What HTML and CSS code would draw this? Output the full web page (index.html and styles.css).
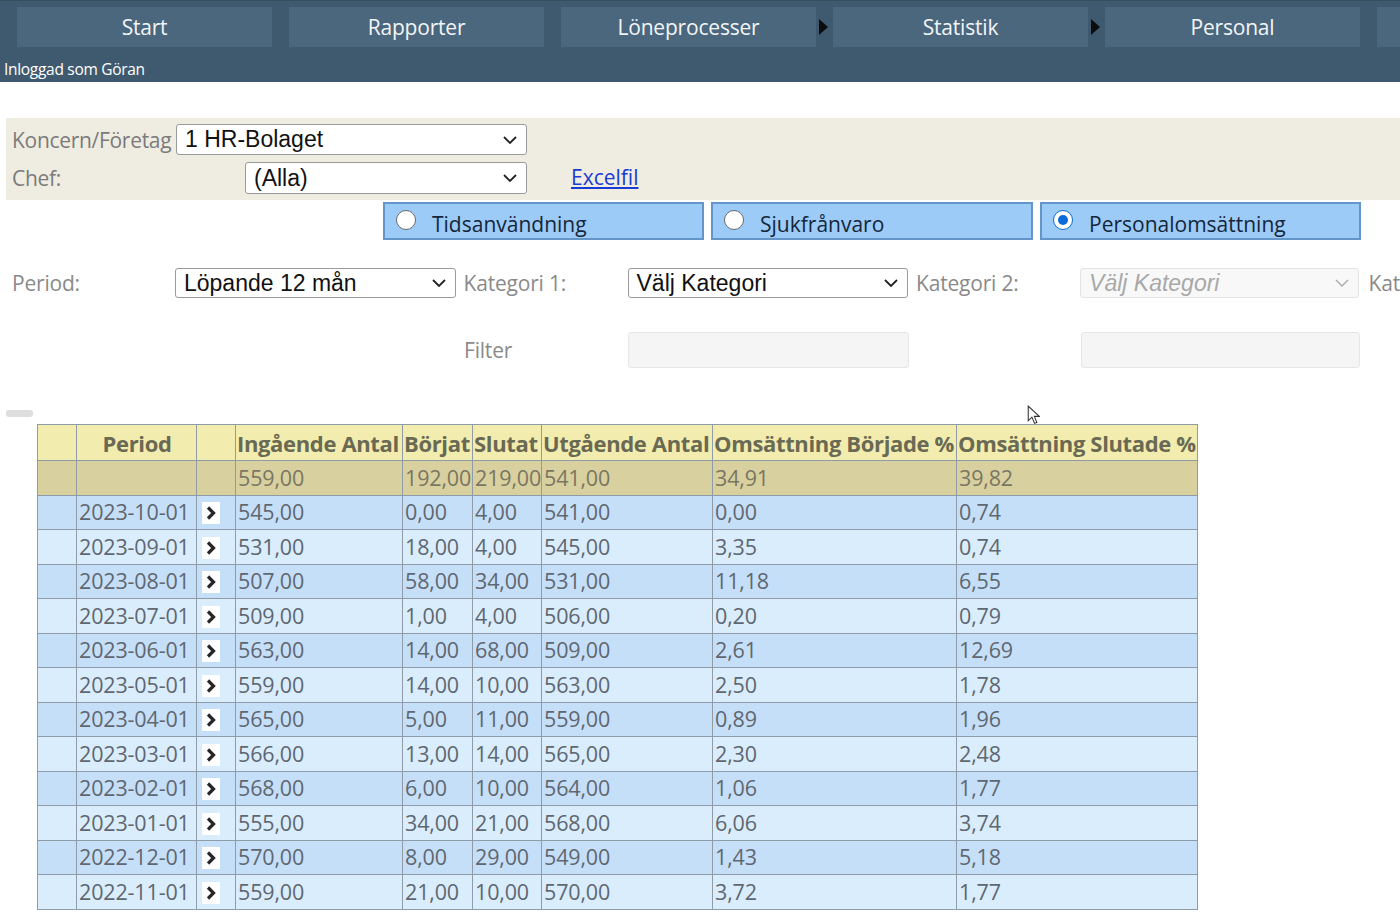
FILE: index.html
```html
<!DOCTYPE html>
<html lang="sv">
<head>
<meta charset="utf-8">
<title>Personalomsättning</title>
<link rel="stylesheet" href="styles.css">
</head>
<body>
<header class="topbar">
  <nav class="menu">
    <div class="menu-item">Start</div>
    <div class="menu-item">Rapporter</div>
    <div class="menu-item has-sub">Löneprocesser<span class="tri"></span></div>
    <div class="menu-item has-sub">Statistik<span class="tri"></span></div>
    <div class="menu-item">Personal</div>
    <div class="menu-item cut"></div>
  </nav>
  <div class="user">Inloggad som Göran</div>
</header>

<section class="company-panel">
  <div class="prow">
    <span class="plabel w164">Koncern/Företag</span>
    <div class="select w351"><span>1 HR-Bolaget</span><svg class="chev" viewBox="0 0 16 10"><path d="M2 2 L8 8 L14 2" fill="none" stroke="#222" stroke-width="1.8"/></svg></div>
  </div>
  <div class="prow">
    <span class="plabel w233">Chef:</span>
    <div class="select w282"><span>(Alla)</span><svg class="chev" viewBox="0 0 16 10"><path d="M2 2 L8 8 L14 2" fill="none" stroke="#222" stroke-width="1.8"/></svg></div>
    <a class="excel" href="#">Excelfil</a>
  </div>
</section>

<div class="radios">
  <label class="rbox"><span class="radio"></span><span class="rtext">Tidsanvändning</span></label>
  <label class="rbox"><span class="radio"></span><span class="rtext">Sjukfrånvaro</span></label>
  <label class="rbox"><span class="radio on"></span><span class="rtext">Personalomsättning</span></label>
</div>

<div class="frow">
  <span class="flabel w163">Period:</span>
  <div class="select fsel w281"><span>Löpande 12 mån</span><svg class="chev" viewBox="0 0 16 10"><path d="M2 2 L8 8 L14 2" fill="none" stroke="#222" stroke-width="1.8"/></svg></div>
  <span class="flabel w164 ml8">Kategori 1:</span>
  <div class="select fsel w281"><span>Välj Kategori</span><svg class="chev" viewBox="0 0 16 10"><path d="M2 2 L8 8 L14 2" fill="none" stroke="#222" stroke-width="1.8"/></svg></div>
  <span class="flabel w164 ml8">Kategori 2:</span>
  <div class="select fsel disabled w279"><span>Välj Kategori</span><svg class="chev" viewBox="0 0 16 10"><path d="M2 2 L8 8 L14 2" fill="none" stroke="#aaa" stroke-width="1.4"/></svg></div>
  <span class="flabel ml10">Kat</span>
</div>

<div class="filterrow">
  <span class="flabel filter-label">Filter</span>
  <div class="finput w281"></div>
  <div class="finput w279 ml172"></div>
</div>

<div class="pill"></div>

<table class="grid">
  <colgroup>
    <col style="width:39px"><col style="width:120px"><col style="width:39px"><col style="width:167px"><col style="width:70px"><col style="width:69px"><col style="width:171px"><col style="width:244px"><col style="width:241px">
  </colgroup>
  <thead>
    <tr><th></th><th class="c">Period</th><th></th><th>Ingående Antal</th><th>Börjat</th><th>Slutat</th><th>Utgående Antal</th><th>Omsättning Började %</th><th>Omsättning Slutade %</th></tr>
  </thead>
  <tbody id="tb">
    <tr class="total"><td></td><td></td><td></td><td>559,00</td><td>192,00</td><td>219,00</td><td>541,00</td><td>34,91</td><td>39,82</td></tr>
  </tbody>
</table>

<svg class="cursor" viewBox="0 0 12 19" width="13" height="20"><path d="M1 1 L1 15 L4.5 11.5 L7 17.5 L9.2 16.6 L6.8 10.8 L11.5 10.8 Z" fill="#fff" stroke="#333" stroke-width="1"/></svg>

<script src="app.js"></script>
</body>
</html>
```

FILE: app.js
```js
var rows = [
  ["2023-10-01","545,00","0,00","4,00","541,00","0,00","0,74"],
  ["2023-09-01","531,00","18,00","4,00","545,00","3,35","0,74"],
  ["2023-08-01","507,00","58,00","34,00","531,00","11,18","6,55"],
  ["2023-07-01","509,00","1,00","4,00","506,00","0,20","0,79"],
  ["2023-06-01","563,00","14,00","68,00","509,00","2,61","12,69"],
  ["2023-05-01","559,00","14,00","10,00","563,00","2,50","1,78"],
  ["2023-04-01","565,00","5,00","11,00","559,00","0,89","1,96"],
  ["2023-03-01","566,00","13,00","14,00","565,00","2,30","2,48"],
  ["2023-02-01","568,00","6,00","10,00","564,00","1,06","1,77"],
  ["2023-01-01","555,00","34,00","21,00","568,00","6,06","3,74"],
  ["2022-12-01","570,00","8,00","29,00","549,00","1,43","5,18"],
  ["2022-11-01","559,00","21,00","10,00","570,00","3,72","1,77"]
];
var tb = document.getElementById("tb");
var chev = '<span class="go"><svg viewBox="0 0 12 16" width="12" height="16"><path d="M3 2.5 L8.5 8 L3 13.5" fill="none" stroke="#262626" stroke-width="3.2"/></svg></span>';
rows.forEach(function (r, i) {
  var tr = document.createElement("tr");
  tr.className = i % 2 === 0 ? "ra" : "rb";
  tr.innerHTML = "<td></td><td>" + r[0] + "</td><td>" + chev + "</td><td>" + r[1] + "</td><td>" + r[2] +
    "</td><td>" + r[3] + "</td><td>" + r[4] + "</td><td>" + r[5] + "</td><td>" + r[6] + "</td>";
  tb.appendChild(tr);
});
```

FILE: styles.css
```css
html, body { margin: 0; padding: 0; background: #fff; }
body { font-family: "Open Sans", "Noto Sans", sans-serif; color: #555; width: 1400px; overflow: hidden; position: relative; height: 917px; }

.topbar { background: #3f5a6f; height: 82px; box-sizing: border-box; padding-top: 6px; border-top: 1px solid #37505f; }
.menu { display: flex; gap: 17px; padding-left: 17px; height: 40px; }
.menu-item { flex: 0 0 255px; height: 40px; background: #4b677d; color: #f2f5f7; font-size: 21px; display: flex; align-items: center; justify-content: center; position: relative; letter-spacing: -0.2px; }
.menu-item.cut { flex: 0 0 40px; }
.tri { position: absolute; right: -12px; top: 12px; width: 0; height: 0; border-top: 8px solid transparent; border-bottom: 8px solid transparent; border-left: 9px solid #0d0d0d; }
.user { color: #fff; font-size: 15.5px; padding-left: 4px; margin-top: 11px; letter-spacing: -0.3px; }

.company-panel { margin: 36px 0 0 6px; background: #efece1; padding: 6px 0 6px 6px; }
.prow { display: flex; align-items: center; height: 31px; }
.prow + .prow { margin-top: 7px; height: 32px; }
.plabel { font-size: 21px; color: #7b7b7b; white-space: nowrap; letter-spacing: -0.3px; }
.w164 { width: 164px; flex: 0 0 164px; }
.w233 { width: 233px; flex: 0 0 233px; }
.w163 { width: 163px; flex: 0 0 163px; }
.w351 { width: 351px; }
.w282 { width: 282px; }
.w281 { width: 281px; }
.w279 { width: 279px; }
.ml8 { margin-left: 8px; }
.ml10 { margin-left: 10px; }
.ml172 { margin-left: 172px; }

.select { box-sizing: border-box; height: 100%; background: #fff; border: 1px solid #9a9a9a; border-radius: 3px; display: flex; align-items: center; justify-content: space-between; padding: 0 8px 0 8px; font-family: "Liberation Sans", Arial, sans-serif; font-size: 23px; color: #111; }
.chev { width: 16px; height: 10px; flex: 0 0 16px; }
.excel { margin-left: 44px; margin-top: -2px; font-size: 21px; color: #1a3bd6; text-decoration: underline; font-family: "Open Sans", sans-serif; }

.radios { display: flex; gap: 7px; margin: 2px 0 0 383px; }
.rbox { box-sizing: border-box; width: 321px; height: 38px; background: #9ccbf8; border: 2px solid #6495c9; display: flex; align-items: center; padding-left: 11px; font-size: 21px; color: #15263a; }
.rbox:nth-child(2) { width: 322px; }
.rtext { padding-top: 5px; }
.radio { width: 20px; height: 20px; box-sizing: border-box; border-radius: 50%; border: 1.5px solid #6a6a6a; background: #fff; margin-right: 16px; margin-top: -2px; position: relative; }
.radio.on { border: 1.5px solid #0b6bd9; }
.radio.on::after { content: ""; position: absolute; left: 3.5px; top: 3.5px; width: 10px; height: 10px; border-radius: 50%; background: #0b6bd9; }

.frow { display: flex; align-items: center; height: 30px; margin: 28px 0 0 12px; white-space: nowrap; }
.flabel { font-size: 21px; color: #8a8a8a; letter-spacing: -0.2px; }
.fsel { font-size: 23px; }
.select.disabled { background: #f8f8f8; border-color: #e4e4e4; color: #a8a8a8; font-style: italic; }

.filterrow { display: flex; align-items: center; height: 36px; margin: 34px 0 0 464px; }
.filter-label { width: 164px; flex: 0 0 164px; }
.finput { box-sizing: border-box; height: 36px; background: #f5f5f5; border: 1px solid #e6e6e6; border-radius: 3px; }

.pill { margin: 42px 0 0 6px; width: 27px; height: 7px; background: #dedede; border-radius: 3px; }

.grid { margin: 7px 0 0 37px; border-collapse: collapse; table-layout: fixed; width: 1160px; font-size: 21.5px; color: #5f6770; letter-spacing: -0.15px; }
.grid th, .grid td { border: 1px solid #8f9ba6; padding: 0 0 0 2px; text-align: left; white-space: nowrap; overflow: hidden; }
.grid th { height: 35px; background: #f2edae; color: #6a6953; font-weight: 700; font-size: 22px; letter-spacing: -0.35px; line-height: 30px; padding-left: 1px; }
.grid th.c { text-align: center; }
.grid td { height: 33.5px; line-height: 30px; }
.grid tr.total td { background: #d8d19f; color: #7a7662; }
.grid tr.ra td { background: #c6dff9; }
.grid tr.rb td { background: #daedfd; }
.go { display: inline-flex; align-items: center; justify-content: center; width: 18px; height: 22px; background: #fff; margin-left: 3px; vertical-align: -1px; }

.cursor { position: absolute; left: 1027px; top: 405px; }
```
